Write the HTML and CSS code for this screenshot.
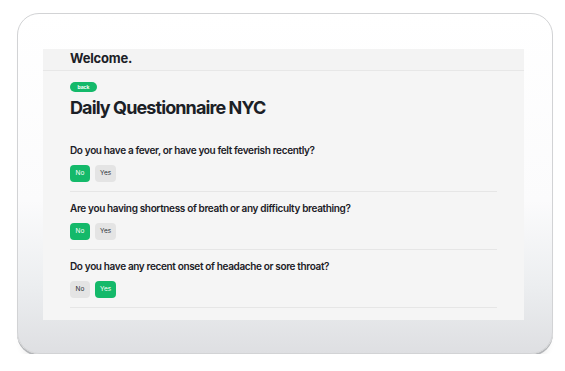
FILE: index.html
```html
<!DOCTYPE html>
<html lang="en">

<head>
    <meta charset="UTF-8">
    <meta name="viewport" content="width=device-width, initial-scale=1.0">
    <title>Daily Questionnaire NYC</title>
    <link rel="stylesheet" href="styles.css">
</head>

<body>
    <div class="device">
        <div class="screen">
            <div class="topbar">Welcome.</div>
            <div class="content">
                <a class="back" href="#">back</a>
                <h1>Daily Questionnaire NYC</h1>
                <div class="question">
                    <p>Do you have a fever, or have you felt feverish recently?</p>
                    <div class="answers">
                        <span class="btn on">No</span>
                        <span class="btn">Yes</span>
                    </div>
                </div>
                <div class="question">
                    <p>Are you having shortness of breath or any difficulty breathing?</p>
                    <div class="answers">
                        <span class="btn on">No</span>
                        <span class="btn">Yes</span>
                    </div>
                </div>
                <div class="question">
                    <p>Do you have any recent onset of headache or sore throat?</p>
                    <div class="answers">
                        <span class="btn">No</span>
                        <span class="btn on">Yes</span>
                    </div>
                </div>
                <div class="question">
                    <p>Have you traveled in the past 14 days to any regions affected by COVID-19?</p>
                </div>
            </div>
        </div>
    </div>
</body>

</html>
```

FILE: styles.css
```css
body {
    margin: 0;
    background: #fff;
    font-family: Inter, "Noto Sans", sans-serif;
    color: #1b2026;
}

.device {
    box-sizing: border-box;
    margin: 13px 0 0 17px;
    width: 536px;
    height: 341px;
    padding: 35px 0 0 25px;
    border: 1.5px solid #d2d3d5;
    border-radius: 22px;
    background: linear-gradient(to bottom, #fff 0%, #fbfbfc 55%, #eceef0 80%, #dedfe2 100%);
    box-shadow: 0 2px 0 #b4b6b9, 0 9px 6px -4px rgba(0, 0, 0, 0.08);
}

.screen {
    width: 481px;
    height: 271px;
    background: #f5f5f5;
    overflow: hidden;
}

.topbar {
    box-sizing: border-box;
    height: 22px;
    padding: 1px 0 0 27px;
    font-size: 13px;
    font-weight: 700;
    letter-spacing: -0.2px;
    background: #f3f3f3;
    border-bottom: 1px solid #e7e7e7;
}

.content {
    padding: 11px 27px 0;
}

.back {
    display: block;
    width: 27px;
    height: 10px;
    line-height: 10px;
    border-radius: 5px;
    background: #14b96a;
    color: #fff;
    font-size: 5px;
    font-weight: 700;
    text-align: center;
    text-decoration: none;
}

h1 {
    margin: 5px 0 0;
    font-size: 18px;
    line-height: 22px;
    font-weight: 700;
    letter-spacing: -0.9px;
}

.question {
    padding: 24px 0 9px;
    border-bottom: 1px solid #e6e6e6;
}

.question + .question {
    padding-top: 9px;
}

.question p {
    margin: 0;
    font-size: 10px;
    line-height: 14px;
    font-weight: 600;
    letter-spacing: -0.35px;
}

.answers {
    display: flex;
    gap: 5px;
    margin-top: 8px;
}

.btn {
    box-sizing: border-box;
    height: 17px;
    line-height: 17px;
    padding: 0 5px;
    min-width: 20px;
    border-radius: 4px;
    background: #e4e4e4;
    color: #2a2f35;
    font-size: 6.5px;
    text-align: center;
}

.btn.on {
    background: #14b96a;
    color: #fff;
}
```
